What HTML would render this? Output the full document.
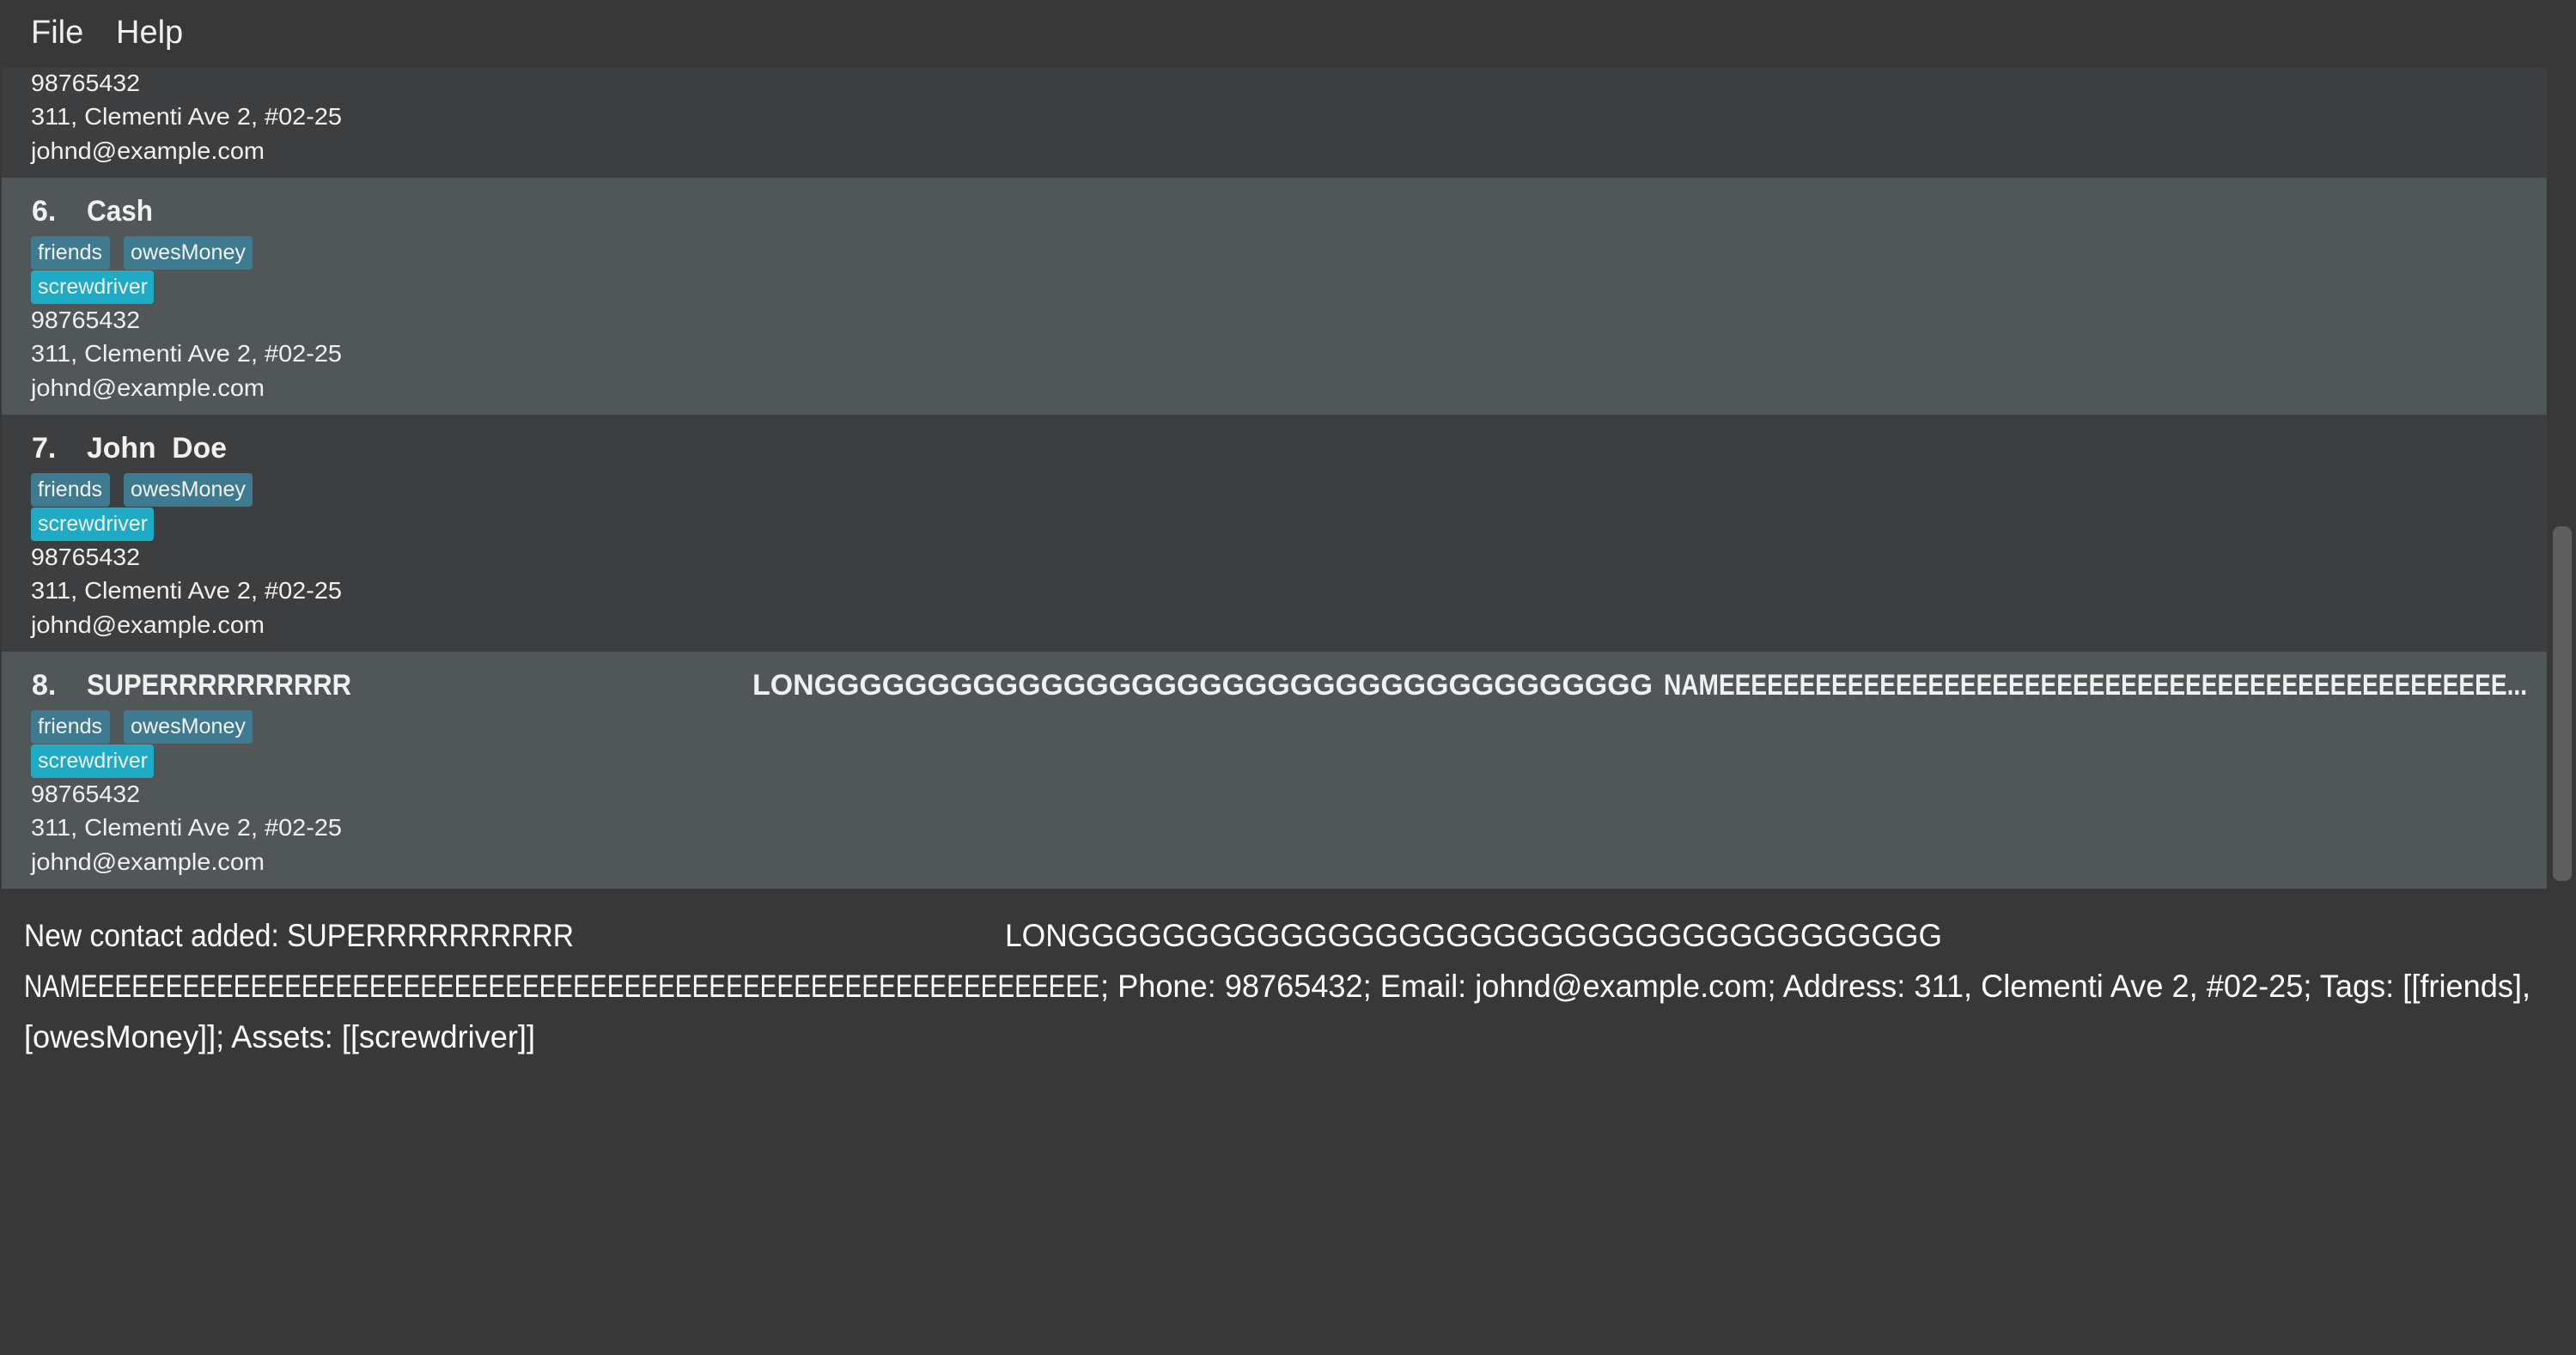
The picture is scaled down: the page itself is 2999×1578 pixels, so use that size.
<!DOCTYPE html>
<html><head><meta charset="utf-8"><style>
*{margin:0;padding:0;box-sizing:border-box}
body{width:2999px;height:1578px;background:#383838;position:relative;overflow:hidden;font-family:"Liberation Sans",sans-serif;color:#fff}
.abs{position:absolute;white-space:nowrap}
.menu{position:absolute;left:0;top:0;width:2999px;height:79px;background:#383838}
.list{position:absolute;left:2px;top:79px;width:2963px;height:956px;background:#3c3e40;overflow:hidden}
.card{position:absolute;left:0;width:2963px;height:276px}
.sel{background:#515658}
.t{position:absolute;left:34px;font-size:28px;color:#f0f0f0;line-height:34px;white-space:nowrap}
.nm{position:absolute;left:35px;font-size:34px;font-weight:bold;color:#f0f0f0;line-height:40px;white-space:nowrap}
.tag{position:absolute;height:39px;border-radius:4px;font-size:25px;line-height:39px;color:#f2f2f2;padding-left:8px}
.tf{background:#3e7b91}
.ta{background:#1fabc6}
.fit{display:inline-block;transform-origin:0 50%}
.r{position:absolute;left:28px;font-size:37px;color:#fff;line-height:50px;white-space:nowrap}
</style></head><body>
<div class="menu">
<div class="abs" style="left:36px;top:16px;font-size:38px;color:#eee;line-height:44px">File</div>
<div class="abs" style="left:135px;top:16px;font-size:38px;color:#eee;line-height:44px">Help</div>
</div>
<div class="list">
<div class="card" style="top:-148px">
<div class="t" style="top:149px"><span class="fit" style="width:127px">98765432</span></div>
<div class="t" style="top:188px"><span class="fit" style="width:362px">311, Clementi Ave 2, #02-25</span></div>
<div class="t" style="top:228px"><span class="fit" style="width:272px">johnd@example.com</span></div>
</div>

<div class="card sel" style="top:128px">
<div class="nm" style="top:19px">6.</div>
<div class="nm" style="top:19px;left:99px"><span class="fit" style="width:77px">Cash</span></div>
<div class="tag tf" style="left:34px;top:68px;width:92px"><span class="fit" style="width:75px">friends</span></div>
<div class="tag tf" style="left:142px;top:68px;width:150px"><span class="fit" style="width:134px">owesMoney</span></div>
<div class="tag ta" style="left:34px;top:108px;width:143px"><span class="fit" style="width:128px">screwdriver</span></div>
<div class="t" style="top:149px"><span class="fit" style="width:127px">98765432</span></div>
<div class="t" style="top:188px"><span class="fit" style="width:362px">311, Clementi Ave 2, #02-25</span></div>
<div class="t" style="top:228px"><span class="fit" style="width:272px">johnd@example.com</span></div>
</div>

<div class="card" style="top:404px">
<div class="nm" style="top:19px">7.</div>
<div class="nm" style="top:19px;left:99px"><span class="fit" style="width:163px">John&nbsp; Doe</span></div>
<div class="tag tf" style="left:34px;top:68px;width:92px"><span class="fit" style="width:75px">friends</span></div>
<div class="tag tf" style="left:142px;top:68px;width:150px"><span class="fit" style="width:134px">owesMoney</span></div>
<div class="tag ta" style="left:34px;top:108px;width:143px"><span class="fit" style="width:128px">screwdriver</span></div>
<div class="t" style="top:149px"><span class="fit" style="width:127px">98765432</span></div>
<div class="t" style="top:188px"><span class="fit" style="width:362px">311, Clementi Ave 2, #02-25</span></div>
<div class="t" style="top:228px"><span class="fit" style="width:272px">johnd@example.com</span></div>
</div>

<div class="card sel" style="top:680px">
<div class="nm" style="top:19px">8.</div>
<div class="nm" style="top:19px;left:99px"><span class="fit" style="width:308px">SUPERRRRRRRRRR</span></div>
<div class="nm" style="top:19px;left:874px"><span class="fit" style="width:1048px">LONGGGGGGGGGGGGGGGGGGGGGGGGGGGGGGGGGGGGG</span></div>
<div class="nm" style="top:19px;left:1935px"><span class="fit" style="width:1005px">NAMEEEEEEEEEEEEEEEEEEEEEEEEEEEEEEEEEEEEEEEEEEEEEEEEE...</span></div>
<div class="tag tf" style="left:34px;top:68px;width:92px"><span class="fit" style="width:75px">friends</span></div>
<div class="tag tf" style="left:142px;top:68px;width:150px"><span class="fit" style="width:134px">owesMoney</span></div>
<div class="tag ta" style="left:34px;top:108px;width:143px"><span class="fit" style="width:128px">screwdriver</span></div>
<div class="t" style="top:149px"><span class="fit" style="width:127px">98765432</span></div>
<div class="t" style="top:188px"><span class="fit" style="width:362px">311, Clementi Ave 2, #02-25</span></div>
<div class="t" style="top:228px"><span class="fit" style="width:272px">johnd@example.com</span></div>
</div>
</div>
<div style="position:absolute;left:2972px;top:613px;width:22px;height:413px;background:#5f5f5f;border-radius:8px"></div>

<div class="r" style="top:1065px"><span class="fit" style="width:640px">New contact added: SUPERRRRRRRRRR</span></div>
<div class="r" style="top:1065px;left:1170px"><span class="fit" style="width:1091px">LONGGGGGGGGGGGGGGGGGGGGGGGGGGGGGGGGGGGGG</span></div>
<div class="r" style="top:1124px"><span class="fit" style="width:1252px">NAMEEEEEEEEEEEEEEEEEEEEEEEEEEEEEEEEEEEEEEEEEEEEEEEEEEEEEEEEEEEE</span></div>
<div class="r" style="top:1124px;left:1281px"><span class="fit" style="width:1665px">; Phone: 98765432; Email: johnd@example.com; Address: 311, Clementi Ave 2, #02-25; Tags: [[friends],</span></div>
<div class="r" style="top:1183px"><span class="fit" style="width:595px">[owesMoney]]; Assets: [[screwdriver]]</span></div>
<script>
document.querySelectorAll('.fit').forEach(function(e){
var w=parseFloat(e.style.width);e.style.width='auto';
var a=e.getBoundingClientRect().width;
if(a>0)e.style.transform='scaleX('+(w/a)+')';
});
</script>
</body></html>
